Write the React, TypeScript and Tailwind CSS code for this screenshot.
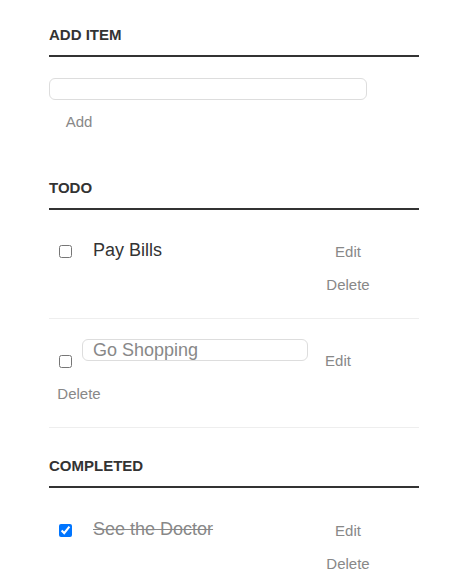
import React, { useState } from 'react';

type Task = { id: number; text: string; done: boolean; editing: boolean };

const initialTasks: Task[] = [
    { id: 1, text: 'Pay Bills', done: false, editing: false },
    { id: 2, text: 'Go Shopping', done: false, editing: true },
    { id: 3, text: 'See the Doctor', done: true, editing: false },
];

const Heading: React.FC<{ children: React.ReactNode; className?: string }> = ({ children, className = '' }) => (
    <h3 className={`pt-[26px] pb-[12px] text-[15px] leading-[17px] font-bold uppercase text-[#333] border-b-2 border-[#333] ${className}`}>
        {children}
    </h3>
);

const TaskRow: React.FC<{ task: Task; onToggle: () => void }> = ({ task, onToggle }) => {
    const btn = 'w-[60px] h-[23px] text-[15px] leading-[23px] text-[#888] text-center cursor-pointer';

    if (task.editing) {
        return (
            <li className="flex flex-wrap items-start pt-[20px] pb-[22px] border-b border-[#eee]">
                <input type="checkbox" checked={task.done} onChange={onToggle} className="mx-[10px] mt-[16px] w-[13px] h-[13px]" />
                <input
                    type="text"
                    defaultValue={task.text}
                    className="w-[226px] h-[22px] pl-[10px] border border-[#ddd] rounded-[6px] bg-white text-[18px] leading-[20px] text-[#888] outline-none"
                />
                <button className={`${btn} mt-[10px]`}>Edit</button>
                <button className={`${btn} mt-[10px]`}>Delete</button>
            </li>
        );
    }

    return (
        <li className={`flex items-start pb-[22px] border-b border-[#eee] last:border-b-0 ${task.done ? 'pt-[21px]' : 'pt-[20px]'}`}>
            <input type="checkbox" checked={task.done} onChange={onToggle} className="mx-[10px] mt-[15px] w-[13px] h-[13px]" />
            <label className={`w-[236px] pl-[11px] text-[18px] leading-[40px] ${task.done ? 'text-[#888] line-through' : 'text-[#333]'}`}>
                {task.text}
            </label>
            <div className="flex flex-col">
                <button className={`${btn} mt-[10px]`}>Edit</button>
                <button className={`${btn} mt-[10px]`}>Delete</button>
            </div>
        </li>
    );
};

export default function App() {
    const [tasks, setTasks] = useState<Task[]>(initialTasks);

    const toggle = (id: number) =>
        setTasks(tasks.map((t) => (t.id === id ? { ...t, done: !t.done } : t)));

    const todo = tasks.filter((t) => !t.done);
    const completed = tasks.filter((t) => t.done);

    return (
        <div className="min-h-screen bg-white" style={{ fontFamily: '"Liberation Sans", Arial, sans-serif' }}>
            <div className="w-[370px] ml-[49px]">
                <Heading>Add item</Heading>
                <div className="flex flex-col items-start">
                    <input
                        type="text"
                        className="mt-[21px] w-[318px] h-[22px] px-[10px] border border-[#ddd] rounded-[6px] bg-white text-[18px] text-[#888] outline-none"
                    />
                    <button className="mt-[10px] w-[60px] h-[23px] text-[15px] leading-[23px] text-[#888] text-center">Add</button>
                </div>

                <Heading className="mt-[20px]">Todo</Heading>
                <ul>
                    {todo.map((t) => (
                        <TaskRow key={t.id} task={t} onToggle={() => toggle(t.id)} />
                    ))}
                </ul>

                <Heading className="mt-[3px]">Completed</Heading>
                <ul>
                    {completed.map((t) => (
                        <TaskRow key={t.id} task={t} onToggle={() => toggle(t.id)} />
                    ))}
                </ul>
            </div>
        </div>
    );
}
